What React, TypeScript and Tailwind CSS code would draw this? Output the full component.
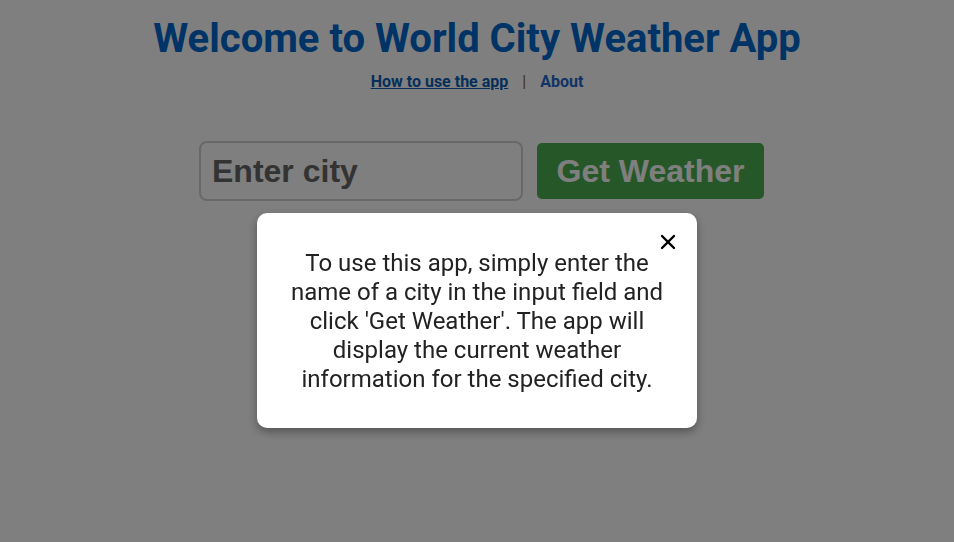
import { X } from 'lucide-react';

export default function App() {
  return (
    <div className="relative min-h-screen bg-white font-['Roboto',sans-serif] overflow-hidden">
      <div className="pt-[15px] text-center">
        <h1 className="text-[40px] font-bold leading-[47px] text-[#0066cc]">Welcome to World City Weather App</h1>
        <nav className="mt-[10px] flex items-center justify-center gap-[14px] text-base font-bold leading-[19px]">
          <a href="#" className="text-[#0a5fb4] underline">How to use the app</a>
          <span className="font-normal text-[#8a6420]">|</span>
          <a href="#" className="text-[#2266cc]">About</a>
        </nav>
      </div>

      <div className="mt-[50px] flex items-center justify-center gap-[14px] pl-[9px]">
        <input
          type="text"
          placeholder="Enter city"
          className="h-[60px] w-[324px] rounded-lg border-2 border-[#d0d0d0] bg-white px-[11px] font-['Liberation_Sans',Arial,sans-serif] text-[32px] font-bold text-[#222] placeholder:text-[#666] focus:outline-none"
        />
        <button className="h-[56px] w-[227px] rounded-[5px] bg-[#4caf50] font-['Liberation_Sans',Arial,sans-serif] text-[32px] font-bold text-white">
          Get Weather
        </button>
      </div>

      {/* modal overlay */}
      <div className="fixed inset-0 flex justify-center bg-black/50 pt-[213px]">
        <div className="relative h-[215px] w-[440px] rounded-[10px] bg-white px-8 pt-9 text-center shadow-[0_4px_10px_rgba(0,0,0,0.35)]">
          <button className="absolute right-[17px] top-[17px] text-black">
            <X size={24} strokeWidth={2.4} />
          </button>
          <p className="text-[24px] leading-[29px] text-[#222]">
            To use this app, simply enter the name of a city in the input field and click 'Get Weather'. The app will display the current weather information for the specified city.
          </p>
        </div>
      </div>
    </div>
  );
}
